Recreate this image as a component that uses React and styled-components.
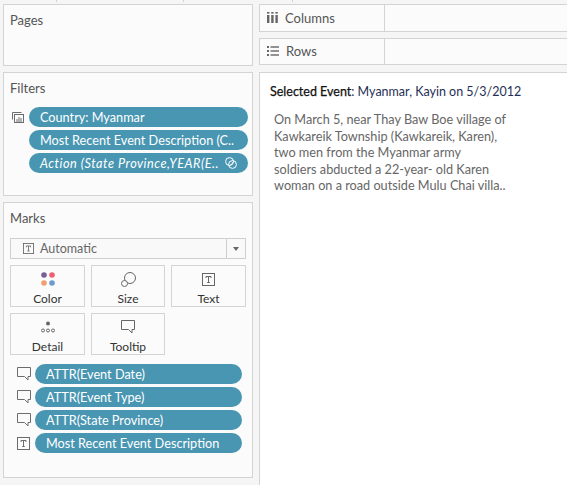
import React from 'react';
import styled, { createGlobalStyle } from 'styled-components';

const GlobalStyle = createGlobalStyle`
  html, body { margin: 0; padding: 0; background: #f5f5f5; }
  body { font-family: "Lato", "Open Sans", sans-serif; }
`;

const Page = styled.div`
  width: 567px;
  height: 485px;
  overflow: hidden;
  display: grid;
  grid-template-columns: 250px 1fr;
  column-gap: 6px;
  padding: 0 0 0 3px;
  box-sizing: border-box;
`;

const Column = styled.div`
  display: flex;
  flex-direction: column;
  min-width: 0;
`;

const TickStrip = styled.div`
  height: 4px;
  flex: none;
  display: flex;
`;

const Tick = styled.span`
  width: 1px;
  height: 2px;
  background: #d4d4d4;
  margin-left: ${p => p.$left}px;
`;

const Card = styled.section`
  box-sizing: border-box;
  height: ${p => p.$height}px;
  margin-bottom: ${p => p.$gap || 0}px;
  background: #fbfbfb;
  border: 1px solid #d4d4d4;
  padding: 7px 6px 0 6px;
  flex: none;
`;

const CardTitle = styled.div`
  font-size: 13px;
  line-height: 16px;
  color: #555;
`;

const PillRow = styled.div`
  display: flex;
  align-items: center;
  height: 20px;
  margin-bottom: 3px;
`;

const FilterList = styled.div`
  margin: 11px 0 0 0;
  padding-left: 2px;
`;

const IconSlot = styled.span`
  width: ${p => p.$width}px;
  flex: none;
  display: flex;
  align-items: center;
  color: #6c6c6c;
`;

const Pill = styled.div`
  box-sizing: border-box;
  flex: none;
  width: ${p => p.$width}px;
  height: 20px;
  border-radius: 10px;
  background: #4996b2;
  color: #fff;
  font-size: 12.7px;
  line-height: 20px;
  padding: 0 11px 0 11px;
  white-space: nowrap;
  display: flex;
  justify-content: space-between;
  align-items: center;
  font-style: ${p => (p.$italic ? 'italic' : 'normal')};
  letter-spacing: ${p => (p.$italic ? '0.5px' : 'normal')};
`;

const TypeSelect = styled.div`
  box-sizing: border-box;
  height: 21px;
  margin-top: 12px;
  width: 236px;
  border: 1px solid #cfcfcf;
  background: #f9f9f9;
  display: flex;
  align-items: center;
  font-size: 12.5px;
  color: #666;
`;

const TypeLabel = styled.span`
  flex: 1;
  display: flex;
  align-items: center;
  gap: 6px;
  padding-left: 12px;
`;

const Caret = styled.span`
  width: 18px;
  height: 100%;
  border-left: 1px solid #cfcfcf;
  display: flex;
  align-items: center;
  justify-content: center;
  &::after {
    content: '';
    border-left: 3.5px solid transparent;
    border-right: 3.5px solid transparent;
    border-top: 4px solid #666;
  }
`;

const MarkGrid = styled.div`
  display: grid;
  grid-template-columns: 75px 74px 75px;
  grid-auto-rows: 42px;
  column-gap: 6px;
  row-gap: 6px;
  width: 236px;
  margin-top: 6px;
`;

const MarkButton = styled.div`
  box-sizing: border-box;
  border: 1px solid #d4d4d4;
  background: #fbfbfb;
  display: flex;
  flex-direction: column;
  align-items: center;
  justify-content: flex-end;
  font-size: 12px;
  line-height: 14px;
  color: #333;
`;

const MarkIcon = styled.span`
  height: 20px;
  margin-bottom: 3px;
  display: flex;
  align-items: center;
  justify-content: center;
  color: #666;
`;

const EncodingList = styled.div`
  margin-top: 9px;
  padding-left: 7px;
`;

const Shelf = styled.div`
  box-sizing: border-box;
  height: ${p => p.$height}px;
  margin-bottom: ${p => p.$gap}px;
  flex: none;
  margin-right: -2px;
  display: grid;
  grid-template-columns: 125px 1fr;
  background: #fbfbfb;
  border: 1px solid #d4d4d4;
`;

const ShelfLabel = styled.div`
  border-right: 1px solid #d4d4d4;
  display: flex;
  align-items: center;
  gap: 7px;
  padding-left: 7px;
  padding-bottom: 1px;
  font-size: 13px;
  color: #555;
`;

const View = styled.main`
  flex: 1;
  box-sizing: border-box;
  margin-right: -2px;
  background: #fff;
  border: 1px solid #d4d4d4;
  border-bottom: none;
  padding: 11px 10px;
`;

const Heading = styled.div`
  font-size: 12.5px;
  line-height: 16px;
  color: #1f3056;
`;

const HeadingKey = styled.span`
  color: #111;
  -webkit-text-stroke: 0.25px #111;
`;

const Description = styled.p`
  margin: 11px 0 0 4px;
  font-size: 12.7px;
  line-height: 16.6px;
  color: #666;
  white-space: pre-line;
`;

const TextIcon = ({ size = 13 }) => (
  <svg width={size} height={size} viewBox="0 0 13 13" fill="none" stroke="currentColor">
    <rect x="0.5" y="0.5" width="12" height="12" />
    <path d="M4 5V3.5H9V5M6.5 3.5V9.5M5.2 9.5H7.8" />
  </svg>
);

const BubbleIcon = () => (
  <svg width="14" height="14" viewBox="0 0 14 14" fill="none" stroke="currentColor">
    <path d="M0.5 0.5H13.5V9.5H11V13L7.5 9.5H0.5Z" />
  </svg>
);

const ColorIcon = () => (
  <svg width="14" height="14" viewBox="0 0 14 14">
    <circle cx="3" cy="3" r="2.8" fill="#7a5f96" />
    <circle cx="11" cy="3" r="2.8" fill="#ef5f73" />
    <circle cx="3" cy="11" r="2.8" fill="#f0a070" />
    <circle cx="11" cy="11" r="2.8" fill="#6c9bd0" />
  </svg>
);

const SizeIcon = () => (
  <svg width="15" height="15" viewBox="0 0 15 15" fill="none" stroke="currentColor">
    <circle cx="9" cy="6" r="5.5" />
    <circle cx="3.5" cy="11.5" r="3" fill="#fbfbfb" />
  </svg>
);

const DetailIcon = () => (
  <svg width="14" height="12" viewBox="0 0 14 12" fill="none" stroke="currentColor">
    <circle cx="7" cy="2.5" r="2" fill="currentColor" stroke="none" />
    <circle cx="2" cy="9.5" r="1.5" />
    <circle cx="7" cy="9.5" r="1.5" />
    <circle cx="12" cy="9.5" r="1.5" />
  </svg>
);

const FilterSetIcon = () => (
  <svg width="12" height="11" viewBox="0 0 12 11" fill="none" stroke="currentColor">
    <path d="M0.5 7.5V0.5H9.5" />
    <rect x="2.5" y="2.5" width="9" height="8" />
    <path d="M5 10V7M7 10V5M9 10V6" />
  </svg>
);

const ContextIcon = () => (
  <svg width="12" height="12" viewBox="0 0 12 12" fill="none" stroke="#fff" style={{ flex: 'none' }}>
    <circle cx="4.5" cy="4.5" r="3.9" />
    <circle cx="7.5" cy="7.5" r="3.9" />
    <path d="M4.7 9L9 4.7" />
  </svg>
);

const ColumnsIcon = () => (
  <svg width="11" height="11" viewBox="0 0 11 11" fill="#666">
    <rect x="0" y="3" width="2.4" height="8" />
    <rect x="4.2" y="3" width="2.4" height="8" />
    <rect x="8.4" y="3" width="2.4" height="8" />
    <rect x="0" y="0" width="2.4" height="1.6" />
    <rect x="4.2" y="0" width="2.4" height="1.6" />
    <rect x="8.4" y="0" width="2.4" height="1.6" />
  </svg>
);

const RowsIcon = () => (
  <svg width="12" height="10" viewBox="0 0 12 10" fill="#666">
    <rect x="0" y="0" width="2" height="2" />
    <rect x="3.5" y="0.3" width="8.5" height="1.4" />
    <rect x="0" y="4" width="2" height="2" />
    <rect x="3.5" y="4.3" width="8.5" height="1.4" />
    <rect x="0" y="8" width="2" height="2" />
    <rect x="3.5" y="8.3" width="8.5" height="1.4" />
  </svg>
);

const marks = [
  { label: 'Color', icon: <ColorIcon /> },
  { label: 'Size', icon: <SizeIcon /> },
  { label: 'Text', icon: <TextIcon /> },
  { label: 'Detail', icon: <DetailIcon /> },
  { label: 'Tooltip', icon: <BubbleIcon /> },
];

const encodings = [
  { label: 'ATTR(Event Date)', icon: <BubbleIcon /> },
  { label: 'ATTR(Event Type)', icon: <BubbleIcon /> },
  { label: 'ATTR(State Province)', icon: <BubbleIcon /> },
  { label: 'Most Recent Event Description', icon: <TextIcon /> },
];

const App = () => (
  <>
    <GlobalStyle />
    <Page>
      <Column>
        <TickStrip>
          <Tick $left={53} />
          <Tick $left={126} />
        </TickStrip>
        <Card $height={62} $gap={6}>
          <CardTitle>Pages</CardTitle>
        </Card>
        <Card $height={124} $gap={6}>
          <CardTitle>Filters</CardTitle>
          <FilterList>
            <PillRow>
              <IconSlot $width={17}><FilterSetIcon /></IconSlot>
              <Pill $width={219}>Country: Myanmar</Pill>
            </PillRow>
            <PillRow>
              <IconSlot $width={17} />
              <Pill $width={219}>Most Recent Event Description (C..</Pill>
            </PillRow>
            <PillRow>
              <IconSlot $width={17} />
              <Pill $width={219} $italic>
                Action (State Province,YEAR(E..
                <ContextIcon />
              </Pill>
            </PillRow>
          </FilterList>
        </Card>
        <Card $height={276}>
          <CardTitle>Marks</CardTitle>
          <TypeSelect>
            <TypeLabel><TextIcon size={11} />Automatic</TypeLabel>
            <Caret />
          </TypeSelect>
          <MarkGrid>
            {marks.map(mark => (
              <MarkButton key={mark.label}>
                <MarkIcon>{mark.icon}</MarkIcon>
                {mark.label}
              </MarkButton>
            ))}
          </MarkGrid>
          <EncodingList>
            {encodings.map(encoding => (
              <PillRow key={encoding.label}>
                <IconSlot $width={18}>{encoding.icon}</IconSlot>
                <Pill $width={207}>{encoding.label}</Pill>
              </PillRow>
            ))}
          </EncodingList>
        </Card>
      </Column>
      <Column>
        <TickStrip>
          <Tick $left={33} />
        </TickStrip>
        <Shelf $height={28} $gap={6}>
          <ShelfLabel><ColumnsIcon />Columns</ShelfLabel>
          <div />
        </Shelf>
        <Shelf $height={27} $gap={7}>
          <ShelfLabel><RowsIcon />Rows</ShelfLabel>
          <div />
        </Shelf>
        <View>
          <Heading><HeadingKey>Selected Event</HeadingKey>: Myanmar, Kayin on 5/3/2012</Heading>
          <Description>{`On March 5, near Thay Baw Boe village of
Kawkareik Township (Kawkareik, Karen),
two men from the Myanmar army
soldiers abducted a 22-year- old Karen
woman on a road outside Mulu Chai villa..`}</Description>
        </View>
      </Column>
    </Page>
  </>
);

export default App;
